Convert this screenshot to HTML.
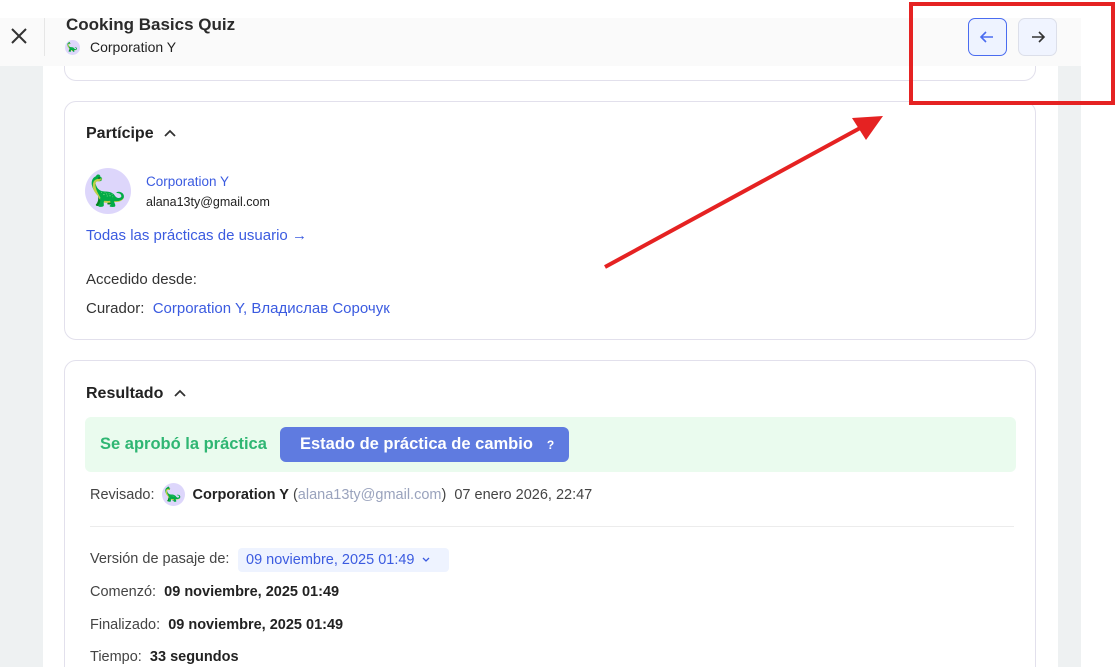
<!DOCTYPE html>
<html><head><meta charset="utf-8"><style>
html,body{margin:0;width:1118px;height:667px;overflow:hidden}
body{background:#fff;font-family:"Liberation Sans",Arial,sans-serif;position:relative;color:#222}
.abs{position:absolute}
.card{position:absolute;left:64px;width:970px;border:1px solid #e2e0ec;border-radius:12px;background:#fff}
.blue{color:#3b5be0}
.av{border-radius:50%;background:#ddd6fb;display:flex;align-items:center;justify-content:center;overflow:hidden}
</style></head><body>
<div class="abs" style="left:0;top:66px;width:43px;height:601px;background:#eef1f2"></div>
<div class="abs" style="left:1058px;top:66px;width:23px;height:601px;background:#eef1f2"></div>
<div class="card" style="top:30px;height:50px;border-top:none;border-radius:0 0 12px 12px"></div>
<div class="abs" style="left:0;top:18px;width:1081px;height:48px;background:#fafafa"></div>
<div class="abs" style="left:44px;top:18px;width:1px;height:38px;background:#e6e6e6"></div>
<svg class="abs" style="left:10px;top:27px" width="18" height="18"><path d="M2 2L16 16M16 2L2 16" stroke="#333" stroke-width="2"/></svg>
<div class="abs" style="left:66px;top:15px;font-size:17px;font-weight:bold;color:#2a2a2a">Cooking Basics Quiz</div>
<div class="abs av" style="left:65px;top:40px;width:15px;height:15px;font-size:9px">🦕</div>
<div class="abs" style="left:90px;top:39px;font-size:14px">Corporation Y</div>
<div class="abs" style="left:968px;top:18px;width:37px;height:36px;border:1px solid #4a6cf0;border-radius:7px;background:#eef3ff"><svg width="37" height="36"><path d="M24 18H13M17 13L12 18L17 23" stroke="#4a6cf0" stroke-width="1.6" fill="none"/></svg></div>
<div class="abs" style="left:1018px;top:18px;width:37px;height:36px;border:1px solid #dcdfea;border-radius:7px;background:#f0f4ff"><svg width="37" height="36"><path d="M13 18H24M20 13L25 18L20 23" stroke="#333" stroke-width="1.6" fill="none"/></svg></div>
<div class="card" style="top:101px;height:237px">
 <div class="abs" style="left:21px;top:23px;font-size:16px;font-weight:600">Partícipe <svg width="12" height="10" style="margin-left:6px"><path d="M1 8L6 3L11 8" stroke="#333" stroke-width="1.8" fill="none"/></svg></div>
 <div class="abs av" style="left:20px;top:66px;width:46px;height:46px;font-size:30px">🦕</div>
 <div class="abs blue" style="left:81px;top:72px;font-size:13.5px">Corporation Y</div>
 <div class="abs" style="left:81px;top:93px;font-size:12.5px">alana13ty@gmail.com</div>
 <div class="abs blue" style="left:21px;top:125px;font-size:15px">Todas las prácticas de usuario →</div>
 <div class="abs" style="left:21px;top:169px;font-size:15px;color:#333">Accedido desde:</div>
 <div class="abs" style="left:21px;top:198px;font-size:15px;color:#333">Curador:&nbsp; <span class="blue">Corporation Y, Владислав Сорочук</span></div>
</div>
<div class="card" style="top:360px;height:330px">
 <div class="abs" style="left:21px;top:24px;font-size:16px;font-weight:600">Resultado <svg width="12" height="10" style="margin-left:6px"><path d="M1 8L6 3L11 8" stroke="#333" stroke-width="1.8" fill="none"/></svg></div>
 <div class="abs" style="left:20px;top:56px;width:931px;height:55px;background:#eafbee;border-radius:6px">
  <div class="abs" style="left:15px;top:18px;color:#2fb673;font-size:16.5px;font-weight:600">Se aprobó la práctica</div>
  <div class="abs" style="left:195px;top:10px;width:289px;height:35px;background:#5f7be0;border-radius:6px;color:#fff;font-size:16.5px;font-weight:600;line-height:35px"><span style="margin-left:20px">Estado de práctica de cambio</span><span style="margin-left:14px;font-size:12px">?</span></div>
 </div>
 <div class="abs" style="left:25px;top:122px;font-size:14.5px;color:#444;display:flex;align-items:center">Revisado:&nbsp;<span class="av" style="width:23px;height:23px;font-size:14px;margin:0 8px 0 3px">🦕</span><b style="color:#222">Corporation Y</b>&nbsp;(<span style="color:#9aa3bd">alana13ty@gmail.com</span>)&nbsp; 07 enero 2026, 22:47</div>
 <div class="abs" style="left:25px;top:165px;width:924px;height:1px;background:#ececec"></div>
 <div class="abs" style="left:25px;top:190px;font-size:14.5px;color:#444">Versión de pasaje de:</div>
 <div class="abs blue" style="left:173px;top:187px;width:211px;height:24px;background:#eef3ff;border-radius:4px;font-size:14.5px;line-height:24px"><span style="margin-left:8px">09 noviembre, 2025 01:49</span><svg width="10" height="8" style="margin-left:6px"><path d="M2 2L5 5L8 2" stroke="#3b5be0" stroke-width="1.3" fill="none"/></svg></div>
 <div class="abs" style="left:25px;top:223px;font-size:14.5px;color:#444">Comenzó:&nbsp; <b style="color:#222">09 noviembre, 2025 01:49</b></div>
 <div class="abs" style="left:25px;top:256px;font-size:14.5px;color:#444">Finalizado:&nbsp; <b style="color:#222">09 noviembre, 2025 01:49</b></div>
 <div class="abs" style="left:25px;top:288px;font-size:14.5px;color:#444">Tiempo:&nbsp; <b style="color:#222">33 segundos</b></div>
</div>
<div class="abs" style="left:909px;top:2px;width:198px;height:95px;border:4px solid #e52222"></div>
<svg class="abs" style="left:0;top:0" width="1118" height="667"><line x1="605" y1="267" x2="862" y2="127" stroke="#e52222" stroke-width="4"/><polygon points="883,116 852,118 866,140" fill="#e52222"/></svg>
</body></html>
